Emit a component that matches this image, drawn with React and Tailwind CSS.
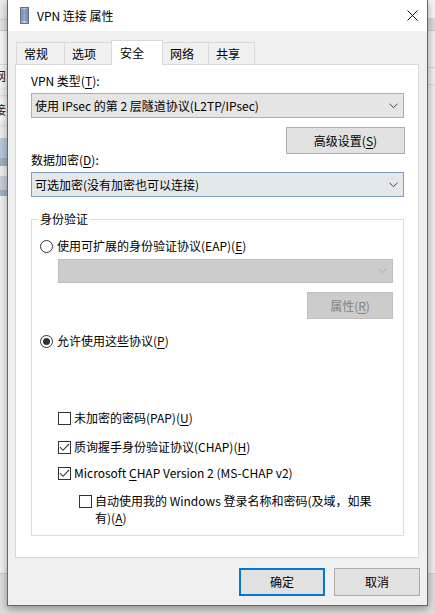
import React from 'react';

const Mn = ({ children }) => (
  <span className="underline underline-offset-[2px] decoration-1">{children}</span>
);

const Chevron = ({ color = '#444' }) => (
  <svg width="9" height="6" viewBox="0 0 9 6" className="shrink-0">
    <path d="M0.5 0.8 L4.5 4.6 L8.5 0.8" fill="none" stroke={color} strokeWidth="1" />
  </svg>
);

const CheckBox = ({ checked }) => (
  <span className="w-[13px] h-[13px] border border-[#333] bg-white flex items-center justify-center shrink-0">
    {checked && (
      <svg width="11" height="11" viewBox="0 0 11 11">
        <path d="M1 5.2 L4 8.3 L10 2" fill="none" stroke="#3a3a3a" strokeWidth="1.1" />
      </svg>
    )}
  </span>
);

const Radio = ({ checked }) => (
  <span className="w-[13px] h-[13px] rounded-full border border-[#333] bg-white flex items-center justify-center shrink-0">
    {checked && <span className="w-[7px] h-[7px] rounded-full bg-[#333]" />}
  </span>
);

const Tab = ({ label, active, width, first }) => (
  <div
    className={
      active
        ? `h-[25px] ${width} -ml-px relative z-10 bg-white border border-b-0 border-[#d9d9d9] flex items-center pl-[8px] pb-[1px]`
        : `h-[23px] ${width} ${first ? '' : '-ml-px'} bg-[#f0f0f0] border border-b-0 border-[#d9d9d9] flex items-center pl-[7px]`
    }
  >
    {label}
  </div>
);

const TitleIcon = () => (
  <svg width="9" height="17" viewBox="0 0 9 17" className="shrink-0">
    <defs>
      <linearGradient id="ti" x1="0" x2="1" y1="0" y2="0">
        <stop offset="0" stopColor="#7f98b8" />
        <stop offset="0.5" stopColor="#c9d6e6" />
        <stop offset="1" stopColor="#6f87a8" />
      </linearGradient>
    </defs>
    <rect x="0.5" y="0.5" width="8" height="16" fill="url(#ti)" stroke="#5d7594" strokeWidth="1" />
    {[3, 5, 7, 9, 11, 13].map((y) => (
      <line key={y} x1="1.5" x2="7.5" y1={y} y2={y} stroke="#4f6786" strokeWidth="0.8" />
    ))}
  </svg>
);

const LeftStrip = () => (
  <div className="w-[7px] shrink-0 flex flex-col overflow-hidden bg-[#eeeeee]">
    <div className="h-[19px] bg-[#e9e9e9]" />
    <div className="h-[1px] bg-[#cfcfcf]" />
    <div className="h-[10px] bg-[#e3e3e3]" />
    <div className="h-[1px] bg-[#cdcdcd]" />
    <div className="h-[33px] bg-[#f6f6f6]" />
    <div className="h-[1px] bg-[#dcdcdc]" />
    <div className="h-[22px] bg-[#f6f6f6] flex items-center text-[12px] text-[#222]">
      <span className="-ml-[6px]">网</span>
    </div>
    <div className="h-[1px] bg-[#dcdcdc] mt-[8px]" />
    <div className="h-[22px] bg-[#f6f6f6] flex items-center text-[12px] text-[#222] mt-[3px]">
      <span className="-ml-[6px]">接</span>
    </div>
    <div className="h-[1px] bg-[#dcdcdc] mt-[4px]" />
    <div className="h-[20px] mt-[12px] bg-[#b9c9dc]" />
    <div className="h-[8px] bg-[#9fb0c2]" />
    <div className="h-[14px] mt-[10px] bg-[#c8d0d8]" />
    <div className="h-[6px] bg-[#9fb2c6]" />
    <div className="flex-1 bg-[#f0f0f0]" />
    <div className="h-[1px] bg-[#cfcfcf]" />
    <div className="h-[40px] bg-[#dcdcdc]" />
  </div>
);

const RightStrip = () => (
  <div className="w-[7px] shrink-0 flex flex-col bg-[#f0f0f0]">
    <div className="h-[18px] bg-[#f4f4f4]" />
    <div className="h-[12px] bg-[#dadada]" />
    <div className="h-[1px] bg-[#c8c8c8]" />
    <div className="h-[36px] bg-[#eeeeee]" />
    <div className="h-[1px] bg-[#d6d6d6]" />
    <div className="h-[16px] bg-[#eeeeee]" />
    <div className="h-[1px] bg-[#d6d6d6]" />
    <div className="flex-1 bg-[#ececec]" />
    <div className="h-[1px] bg-[#cfcfcf]" />
    <div className="h-[40px] bg-[#dcdcdc]" />
  </div>
);

export default function App() {
  return (
    <div className="w-[435px] h-[614px] flex overflow-hidden bg-[#dcdcdc] text-[12px] leading-[16px] text-black font-['Noto_Sans_CJK_SC',sans-serif]">
      <LeftStrip />

      <div className="w-[421px] h-[606px] shrink-0 flex flex-col border-x border-b border-[#1979d2] bg-[#f0f0f0] shadow-[0_3px_8px_rgba(0,0,0,0.35)] relative z-10">
        {/* title bar */}
        <div className="h-[31px] bg-white flex items-center shrink-0">
          <div className="ml-[12px]">
            <TitleIcon />
          </div>
          <span className="ml-[8px]">VPN 连接 属性</span>
          <div className="ml-auto mr-[9px] w-[12px] h-[12px] flex items-center justify-center">
            <svg width="11" height="11" viewBox="0 0 11 11">
              <path d="M0.5 0.5 L10.5 10.5 M10.5 0.5 L0.5 10.5" stroke="#111" strokeWidth="1" />
            </svg>
          </div>
        </div>

        {/* body */}
        <div className="flex-1 flex flex-col pt-[9px]">
          <div className="flex items-end h-[25px] -mb-px ml-[8px]">
            <Tab label="常规" width="w-[49px]" first />
            <Tab label="选项" width="w-[48px]" />
            <Tab label="安全" width="w-[52px]" active />
            <Tab label="网络" width="w-[47px]" />
            <Tab label="共享" width="w-[47px]" />
          </div>

          <div className="ml-[7px] w-[404px] h-[494px] bg-white border border-[#d9d9d9] flex flex-col pl-[15px]">
            <div className="mt-[8px]">
              VPN 类型(<Mn>T</Mn>):
            </div>
            <div className="mt-[4px] w-[373px] h-[25px] bg-[#e5e5e5] border border-[#adadad] flex items-center pl-[3px] pr-[5px]">
              <span className="flex-1">使用 IPsec 的第 2 层隧道协议(L2TP/IPsec)</span>
              <Chevron />
            </div>
            <div className="mt-[9px] ml-[255px] w-[119px] h-[27px] bg-[#e1e1e1] border border-[#adadad] flex items-center justify-center">
              高级设置(<Mn>S</Mn>)
            </div>
            <div className="-mt-[2px]">
              数据加密(<Mn>D</Mn>):
            </div>
            <div className="mt-[4px] w-[373px] h-[25px] bg-[#e5e8eb] border border-[#7f9dbf] flex items-center pl-[3px] pr-[5px]">
              <span className="flex-1">可选加密(没有加密也可以连接)</span>
              <Chevron />
            </div>

            <fieldset className="mt-[14px] w-[373px] h-[325px] border border-[#dcdcdc] pl-[8px] flex flex-col">
              <legend className="-ml-[2px] px-[2px]">身份验证</legend>

              <div className="mt-[11px] flex items-center gap-[4px]">
                <Radio />
                <span>使用可扩展的身份验证协议(EAP)(<Mn>E</Mn>)</span>
              </div>
              <div className="ml-[18px] w-[335px] flex flex-col">
                <div className="mt-[5px] h-[24px] bg-[#cccccc] border border-[#bfbfbf] flex items-center justify-end pr-[5px]">
                  <Chevron color="#a6a6a6" />
                </div>
                <div className="mt-[9px] self-end w-[86px] h-[27px] bg-[#cccccc] border border-[#bfbfbf] flex items-center justify-center text-[#838383]">
                  属性(<Mn>R</Mn>)
                </div>
              </div>

              <div className="mt-[14px] flex items-center gap-[4px]">
                <Radio checked />
                <span>
                  允许使用这些协议(<Mn>P</Mn>)
                </span>
              </div>

              <div className="ml-[18px] flex flex-col">
                <div className="mt-[61px] flex items-center gap-[3px]">
                  <CheckBox />
                  <span>
                    未加密的密码(PAP)(<Mn>U</Mn>)
                  </span>
                </div>
                <div className="mt-[13px] flex items-center gap-[3px]">
                  <CheckBox checked />
                  <span>
                    质询握手身份验证协议(CHAP)(<Mn>H</Mn>)
                  </span>
                </div>
                <div className="mt-[10px] flex items-center gap-[3px]">
                  <CheckBox checked />
                  <span>
                    Microsoft <Mn>C</Mn>HAP Version 2 (MS-CHAP v2)
                  </span>
                </div>
                <div className="mt-[12px] ml-[21px] flex items-start gap-[3px]">
                  <div className="h-[16px] flex items-center">
                    <CheckBox />
                  </div>
                  <div className="flex flex-col leading-[17px] -mt-[1px]">
                    <span>自动使用我的 Windows 登录名称和密码(及域，如果</span>
                    <span>
                      有)(<Mn>A</Mn>)
                    </span>
                  </div>
                </div>
              </div>
            </fieldset>
          </div>

          <div className="mt-[10px] flex justify-end gap-[9px] pr-[7px]">
            <div className="w-[86px] h-[28px] bg-[#e1e1e1] border-2 border-[#0078d7] flex items-center justify-center">
              确定
            </div>
            <div className="w-[86px] h-[28px] bg-[#e1e1e1] border border-[#adadad] flex items-center justify-center">
              取消
            </div>
          </div>
        </div>
      </div>

      <RightStrip />
    </div>
  );
}
